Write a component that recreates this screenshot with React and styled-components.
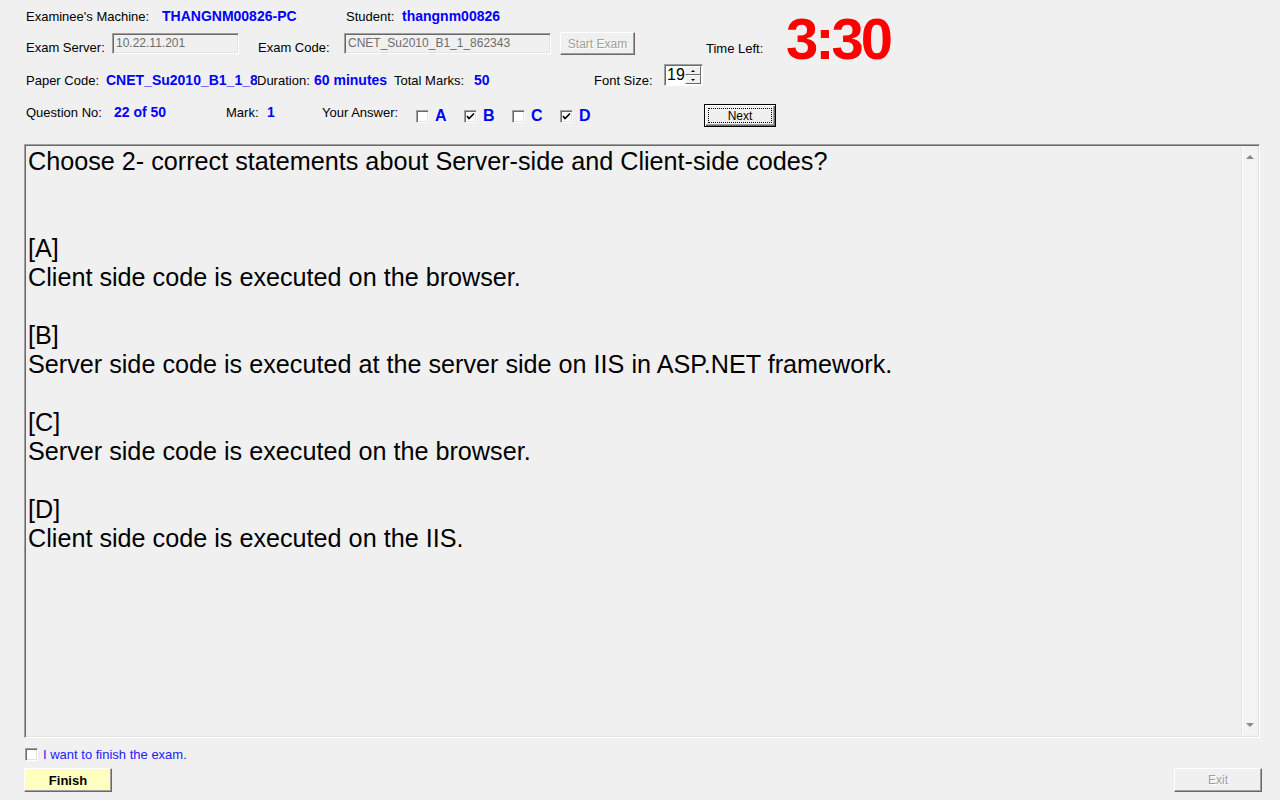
import React from 'react';
import styled, { createGlobalStyle } from 'styled-components';

const GlobalStyle = createGlobalStyle`
  html, body {
    margin: 0;
    padding: 0;
    background: #f0f0f0;
  }
  body {
    font-family: "Liberation Sans", Arial, sans-serif;
    color: #000;
  }
`;

const Form = styled.div`
  width: 1280px;
  height: 800px;
  background: #f0f0f0;
  box-sizing: border-box;
  padding-left: 24px;
  overflow: hidden;
`;

const Header = styled.div`
  padding-left: 2px;
`;

const TopBlock = styled.div`
  display: flex;
  height: 62px;
`;

const LeftBlock = styled.div`
  width: 680px;
  display: flex;
  flex-direction: column;
`;

const Row = styled.div`
  display: flex;
  align-items: flex-start;
  height: ${(p) => p.$h}px;
`;

const Label = styled.div`
  font-size: 13px;
  line-height: 15px;
  white-space: nowrap;
  width: ${(p) => (p.$w ? `${p.$w}px` : 'auto')};
  margin-top: ${(p) => p.$top || 0}px;
  margin-left: ${(p) => p.$left || 0}px;
  flex-shrink: 0;
`;

const Value = styled.div`
  font-size: 14px;
  line-height: 15px;
  font-weight: bold;
  color: #0000ff;
  white-space: nowrap;
  overflow: hidden;
  width: ${(p) => (p.$w ? `${p.$w}px` : 'auto')};
  margin-top: ${(p) => p.$top || 0}px;
  flex-shrink: 0;
`;

const TextBox = styled.div`
  box-sizing: border-box;
  width: ${(p) => p.$w}px;
  height: 21px;
  margin-top: ${(p) => p.$top || 0}px;
  border: 1px solid;
  border-color: #a0a0a0 #fff #fff #a0a0a0;
  box-shadow: inset 1px 1px 0 #696969, inset -1px -1px 0 #e3e3e3;
  font-size: 12px;
  line-height: 18px;
  padding-left: 3px;
  color: #6d6d6d;
  white-space: nowrap;
  overflow: hidden;
  flex-shrink: 0;
`;

const Button = styled.div`
  box-sizing: border-box;
  width: ${(p) => p.$w}px;
  height: ${(p) => p.$h || 23}px;
  margin-top: ${(p) => p.$top || 0}px;
  margin-left: ${(p) => p.$left || 0}px;
  display: flex;
  align-items: center;
  justify-content: center;
  border: 1px solid;
  border-color: #fff #696969 #696969 #fff;
  box-shadow: inset -1px -1px 0 #a0a0a0;
  background: ${(p) => p.$bg || '#f0f0f0'};
  font-size: ${(p) => (p.$bold ? 13 : 12)}px;
  font-weight: ${(p) => (p.$bold ? 'bold' : 'normal')};
  color: ${(p) => (p.$disabled ? '#a0a0a0' : '#000')};
  text-shadow: ${(p) => (p.$disabled ? '1px 1px 0 #fff' : 'none')};
  flex-shrink: 0;
`;

const DefaultButton = styled(Button)`
  border: 1px solid #000;
  box-shadow: inset 1px 1px 0 #fff, inset -1px -1px 0 #696969, inset -2px -2px 0 #a0a0a0;
  position: relative;
  &::after {
    content: '';
    position: absolute;
    inset: 3px;
    border: 1px dotted #000;
  }
`;

const TimeBlock = styled.div`
  display: flex;
  align-items: flex-start;
`;

const Clock = styled.div`
  font-size: 58px;
  line-height: 58px;
  font-weight: bold;
  color: #ff0000;
  letter-spacing: -3px;
  margin-top: 10px;
`;

const Spinner = styled.div`
  box-sizing: border-box;
  width: 39px;
  height: 22px;
  margin-top: 2px;
  display: flex;
  border: 1px solid;
  border-color: #a0a0a0 #fff #fff #a0a0a0;
  box-shadow: inset 1px 1px 0 #696969;
  background: #fff;
`;

const SpinValue = styled.div`
  flex: 1;
  font-size: 16px;
  line-height: 20px;
  padding-left: 2px;
`;

const SpinButtons = styled.div`
  display: flex;
  flex-direction: column;
  width: 17px;
  padding: 1px 1px 1px 0;
  box-sizing: border-box;
`;

const SpinButton = styled.div`
  flex: 1;
  box-sizing: border-box;
  border: 1px solid;
  border-color: #fff #696969 #696969 #fff;
  background: #f0f0f0;
  display: flex;
  align-items: center;
  justify-content: center;
  &::before {
    content: '';
    border-left: 2px solid transparent;
    border-right: 2px solid transparent;
    ${(p) => (p.$up ? 'border-bottom: 2px solid #000;' : 'border-top: 2px solid #000;')}
  }
`;

const Options = styled.div`
  display: flex;
  width: 288px;
  flex-shrink: 0;
`;

const Option = styled.div`
  display: flex;
  align-items: flex-start;
  width: 48px;
`;

const Box = styled.div`
  box-sizing: border-box;
  width: 13px;
  height: 13px;
  margin-top: ${(p) => p.$top || 0}px;
  border: 1px solid;
  border-color: #a0a0a0 #fff #fff #a0a0a0;
  box-shadow: inset 1px 1px 0 #696969, inset -1px -1px 0 #e3e3e3;
  background: #fff;
  display: flex;
  align-items: center;
  justify-content: center;
  flex-shrink: 0;
`;

const Letter = styled.div`
  font-size: 16px;
  line-height: 18px;
  font-weight: bold;
  color: #0000ff;
  margin-left: 6px;
  margin-top: 11px;
`;

const Panel = styled.div`
  box-sizing: border-box;
  margin-top: 14px;
  width: 1236px;
  height: 594px;
  display: flex;
  border: 1px solid;
  border-color: #a0a0a0 #fff #fff #a0a0a0;
  box-shadow: inset 1px 1px 0 #696969, inset -1px -1px 0 #e3e3e3;
  padding: 2px;
`;

const QuestionText = styled.div`
  flex: 1;
  padding-left: 1px;
  font-size: 25.2px;
  line-height: 29px;
  color: #000;
  white-space: pre;
`;

const Line = styled.div`
  height: 29px;
`;

const ScrollBar = styled.div`
  width: 16px;
  display: flex;
  flex-direction: column;
  justify-content: space-between;
  align-items: center;
  background: #f3f3f3;
  border-left: 1px solid #e4e4e4;
  box-shadow: inset 1px 0 0 #fff;
  padding: 8px 0;
  box-sizing: border-box;
`;

const Arrow = styled.div`
  width: 0;
  height: 0;
  border-left: 4px solid transparent;
  border-right: 4px solid transparent;
  ${(p) => (p.$up ? 'border-bottom: 4px solid #8a8a8a;' : 'border-top: 4px solid #8a8a8a;')}
`;

const FinishRow = styled.div`
  display: flex;
  align-items: center;
  margin-top: 10px;
  padding-left: 1px;
  height: 13px;
`;

const FinishText = styled.div`
  font-size: 13px;
  color: #2020ff;
  margin-left: 5px;
`;

const Bottom = styled.div`
  display: flex;
  justify-content: space-between;
  margin-top: 7px;
  width: 1238px;
`;

const Check = () => (
  <svg width="9" height="9" viewBox="0 0 9 9">
    <path d="M1 4 L3 6.5 L8 1.5" stroke="#000" strokeWidth="1.6" fill="none" />
  </svg>
);

const question = [
  'Choose 2- correct statements about Server-side and Client-side codes?',
  '',
  '',
  '[A]',
  'Client side code is executed on the browser.',
  '',
  '[B]',
  'Server side code is executed at the server side on IIS in ASP.NET framework.',
  '',
  '[C]',
  'Server side code is executed on the browser.',
  '',
  '[D]',
  'Client side code is executed on the IIS.',
];

const answers = [
  { key: 'A', checked: false },
  { key: 'B', checked: true },
  { key: 'C', checked: false },
  { key: 'D', checked: true },
];

export default function App() {
  return (
    <>
      <GlobalStyle />
      <Form>
        <Header>
          <TopBlock>
            <LeftBlock>
              <Row $h={28}>
                <Label $w={136} $top={9}>Examinee's Machine:</Label>
                <Value $w={184} $top={9}>THANGNM00826-PC</Value>
                <Label $w={56} $top={9}>Student:</Label>
                <Value $top={9}>thangnm00826</Value>
              </Row>
              <Row $h={34}>
                <Label $w={86} $top={12}>Exam Server:</Label>
                <TextBox $w={127} $top={5}>10.22.11.201</TextBox>
                <Label $w={86} $top={12} $left={19}>Exam Code:</Label>
                <TextBox $w={207} $top={5}>CNET_Su2010_B1_1_862343</TextBox>
                <Button $w={75} $top={4} $left={9} $disabled>Start Exam</Button>
              </Row>
            </LeftBlock>
            <TimeBlock>
              <Label $w={80} $top={41}>Time Left:</Label>
              <Clock>3:30</Clock>
            </TimeBlock>
          </TopBlock>
          <Row $h={34}>
            <Label $w={80} $top={11}>Paper Code:</Label>
            <Value $w={151} $top={11}>CNET_Su2010_B1_1_862343</Value>
            <Label $w={57} $top={11}>Duration:</Label>
            <Value $w={80} $top={11}>60 minutes</Value>
            <Label $w={80} $top={11}>Total Marks:</Label>
            <Value $w={120} $top={11}>50</Value>
            <Label $w={70} $top={11}>Font Size:</Label>
            <Spinner>
              <SpinValue>19</SpinValue>
              <SpinButtons>
                <SpinButton $up />
                <SpinButton />
              </SpinButtons>
            </Spinner>
          </Row>
          <Row $h={34}>
            <Label $w={88} $top={9}>Question No:</Label>
            <Value $w={112} $top={9}>22 of 50</Value>
            <Label $w={41} $top={9}>Mark:</Label>
            <Value $w={55} $top={9}>1</Value>
            <Label $w={94} $top={9}>Your Answer:</Label>
            <Options>
              {answers.map((a) => (
                <Option key={a.key}>
                  <Box $top={14}>{a.checked && <Check />}</Box>
                  <Letter>{a.key}</Letter>
                </Option>
              ))}
            </Options>
            <DefaultButton $w={72} $top={8}>Next</DefaultButton>
          </Row>
        </Header>
        <Panel>
          <QuestionText>
            {question.map((line, i) => (
              <Line key={i}>{line}</Line>
            ))}
          </QuestionText>
          <ScrollBar>
            <Arrow $up />
            <Arrow />
          </ScrollBar>
        </Panel>
        <FinishRow>
          <Box />
          <FinishText>I want to finish the exam.</FinishText>
        </FinishRow>
        <Bottom>
          <Button $w={88} $h={24} $bg="#ffffc0" $bold>Finish</Button>
          <Button $w={88} $h={24} $disabled>Exit</Button>
        </Bottom>
      </Form>
    </>
  );
}
